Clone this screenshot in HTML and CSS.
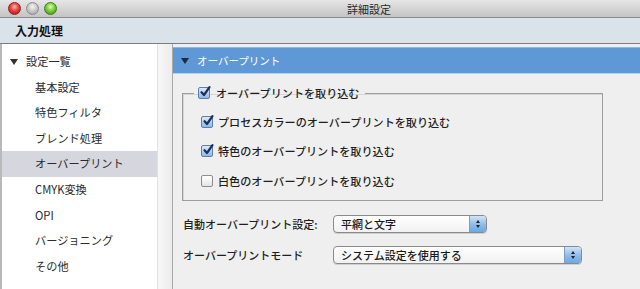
FILE: index.html
```html
<!DOCTYPE html>
<html lang="ja">
<head>
<meta charset="utf-8">
<link rel="stylesheet" href="styles.css">
</head>
<body>
<div class="window">
  <div class="titlebar">
    <div class="lights">
      <span class="light red"></span>
      <span class="light gray"></span>
      <span class="light green"></span>
    </div>
    <div class="title">詳細設定</div>
  </div>
  <div class="toolbar">入力処理</div>
  <div class="main">
    <div class="sidebar">
      <div class="row top"><span class="tri"></span>設定一覧</div>
      <div class="row item">基本設定</div>
      <div class="row item">特色フィルタ</div>
      <div class="row item">ブレンド処理</div>
      <div class="row item selected">オーバープリント</div>
      <div class="row item">CMYK変換</div>
      <div class="row item">OPI</div>
      <div class="row item">バージョニング</div>
      <div class="row item">その他</div>
    </div>
    <div class="scrolltrack"></div>
    <div class="panel">
      <div class="panel-head"><span class="tri dark"></span>オーバープリント</div>
      <div class="panel-body">
        <fieldset class="group">
          <legend class="legend">
            <span class="cb checked"><svg viewBox="0 0 12 12" width="12" height="12"><path d="M2.5 6.2 L5 9 L10.5 1.2" fill="none" stroke="#1a2f5a" stroke-width="2.2" stroke-linecap="round" stroke-linejoin="round"/></svg></span>
            <span class="lbl">オーバープリントを取り込む</span>
          </legend>
          <div class="opt">
            <span class="cb checked"><svg viewBox="0 0 12 12" width="12" height="12"><path d="M2.5 6.2 L5 9 L10.5 1.2" fill="none" stroke="#1a2f5a" stroke-width="2.2" stroke-linecap="round" stroke-linejoin="round"/></svg></span>
            <span class="lbl">プロセスカラーのオーバープリントを取り込む</span>
          </div>
          <div class="opt">
            <span class="cb checked"><svg viewBox="0 0 12 12" width="12" height="12"><path d="M2.5 6.2 L5 9 L10.5 1.2" fill="none" stroke="#1a2f5a" stroke-width="2.2" stroke-linecap="round" stroke-linejoin="round"/></svg></span>
            <span class="lbl">特色のオーバープリントを取り込む</span>
          </div>
          <div class="opt">
            <span class="cb"></span>
            <span class="lbl">白色のオーバープリントを取り込む</span>
          </div>
        </fieldset>
        <div class="field first">
          <span class="flabel">自動オーバープリント設定:</span>
          <div class="select short">
            <span class="sval">平網と文字</span>
            <span class="stepper"><span class="up"></span><span class="down"></span></span>
          </div>
        </div>
        <div class="field">
          <span class="flabel">オーバープリントモード</span>
          <div class="select long">
            <span class="sval">システム設定を使用する</span>
            <span class="stepper"><span class="up"></span><span class="down"></span></span>
          </div>
        </div>
      </div>
    </div>
  </div>
</div>
</body>
</html>
```

FILE: styles.css
```css
* { box-sizing: border-box; }
html, body {
  margin: 0;
  padding: 0;
  width: 640px;
  height: 289px;
  overflow: hidden;
  background: #efefef;
}
body {
  font-family: "Noto Sans CJK JP", "Noto Sans", sans-serif;
  color: #222;
}
.window {
  width: 640px;
  height: 289px;
  display: flex;
  flex-direction: column;
}
.titlebar {
  height: 18px;
  flex: none;
  background: linear-gradient(#e6e6e6, #c4c4c4);
  border-bottom: 1px solid #8c8c8c;
  display: flex;
  align-items: center;
  position: relative;
}
.lights {
  display: flex;
  gap: 5px;
  padding-left: 8px;
}
.light {
  width: 13px;
  height: 13px;
  border-radius: 50%;
  display: block;
}
.light.red {
  background: radial-gradient(circle at 50% 35%, #ffb4b4 0%, #e9413f 45%, #a8100f 100%);
  border: 1px solid #8a2020;
}
.light.gray {
  background: radial-gradient(circle at 50% 35%, #f4f4f4 0%, #c6c6c6 50%, #9a9a9a 100%);
  border: 1px solid #8c8c8c;
}
.light.green {
  background: radial-gradient(circle at 50% 35%, #d9ffb0 0%, #7ccd3c 45%, #3d8a12 100%);
  border: 1px solid #3f7a20;
}
.title {
  position: absolute;
  left: 347px;
  top: 0;
  line-height: 18px;
  font-size: 11px;
  color: #2a2a2a;
}
.toolbar {
  height: 26px;
  flex: none;
  background: #dae2ea;
  border-bottom: 1px solid #7d7d7d;
  font-size: 12px;
  font-weight: 700;
  line-height: 25px;
  padding-left: 15px;
  color: #111;
}
.main {
  flex: 1;
  display: flex;
  min-height: 0;
}
.sidebar {
  width: 157px;
  flex: none;
  background: #fff;
  border-left: 2px solid #b9b9b9;
  padding-top: 5px;
}
.row {
  height: 25.6px;
  line-height: 25.6px;
  font-size: 11.2px;
  color: #2b2b2b;
  white-space: nowrap;
}
.row.top {
  padding-left: 8px;
  display: flex;
  align-items: center;
}
.row.item {
  padding-left: 33px;
}
.row.selected {
  background: #d6d6de;
}
.tri {
  display: inline-block;
  width: 0;
  height: 0;
  border-left: 4px solid transparent;
  border-right: 4px solid transparent;
  border-top: 6px solid #333;
  margin-right: 8px;
}
.scrolltrack {
  width: 16px;
  flex: none;
  background: linear-gradient(to right, #f7f7f7, #ececec);
  border-right: 1px solid #a9a9a9;
  border-left: 1px solid #e2e2e2;
}
.panel {
  flex: 1;
  display: flex;
  flex-direction: column;
  padding-top: 3px;
  background: #efefef;
}
.panel-head {
  height: 27px;
  flex: none;
  background: #5f98d6;
  border-top: 1px solid #8fb6e2;
  border-bottom: 1px solid #b4d2f0;
  color: #fff;
  font-size: 10.5px;
  display: flex;
  align-items: center;
  padding-left: 8px;
}
.tri.dark {
  border-top-color: #1f2a3a;
  margin-right: 8px;
}
.panel-body {
  padding-left: 9px;
}
.group {
  width: 421px;
  margin: 11px 0 0 0;
  padding: 6px 0 4px 18px;
  border: 1px solid #9d9d9d;
  box-shadow: inset 1px 1px 0 #d6d6d6;
  min-width: 0;
}
.legend {
  padding: 0 6px 0 4px;
  margin-left: -7px;
  display: flex;
  align-items: center;
  gap: 6px;
  height: 16px;
}
.opt {
  height: 29.6px;
  display: flex;
  align-items: center;
  gap: 5px;
}
.cb {
  width: 12px;
  height: 12px;
  flex: none;
  border: 1px solid #8d8d8d;
  border-radius: 2px;
  background: linear-gradient(#ffffff, #e4e4e4);
  display: flex;
  align-items: center;
  justify-content: center;
  overflow: visible;
}
.cb.checked {
  background: linear-gradient(#dceaf9, #8fb8e6);
  border-color: #5b7fae;
}
.cb svg {
  display: block;
  margin-top: -2px;
  margin-left: 1px;
  overflow: visible;
}
.lbl {
  font-size: 11.1px;
  font-weight: 500;
  color: #1e1e1e;
  white-space: nowrap;
}
.field {
  display: flex;
  align-items: center;
  height: 31px;
  padding-left: 1px;
}
.field.first {
  margin-top: 8px;
}
.flabel {
  width: 150px;
  flex: none;
  font-size: 11px;
  font-weight: 500;
  color: #1e1e1e;
  white-space: nowrap;
}
.select {
  height: 18px;
  border: 1px solid #8a8a8a;
  border-radius: 4px;
  background: linear-gradient(#ffffff, #f1f1f1);
  display: flex;
  align-items: center;
  overflow: hidden;
  box-shadow: 0 1px 0 #cfcfcf;
}
.select.short { width: 154px; }
.select.long { width: 249px; }
.sval {
  flex: 1;
  padding-left: 7px;
  font-size: 11px;
  font-weight: 500;
  white-space: nowrap;
  color: #1a1a1a;
}
.stepper {
  width: 17px;
  height: 100%;
  flex: none;
  background: linear-gradient(#d1e4f7, #8bbbe9 55%, #6ea7e2);
  border-left: 1px solid #7c9ec6;
  display: flex;
  flex-direction: column;
  align-items: center;
  justify-content: center;
  gap: 2px;
}
.up, .down {
  width: 0;
  height: 0;
  border-left: 2.5px solid transparent;
  border-right: 2.5px solid transparent;
}
.up { border-bottom: 3px solid #1c2430; }
.down { border-top: 3px solid #1c2430; }
```
